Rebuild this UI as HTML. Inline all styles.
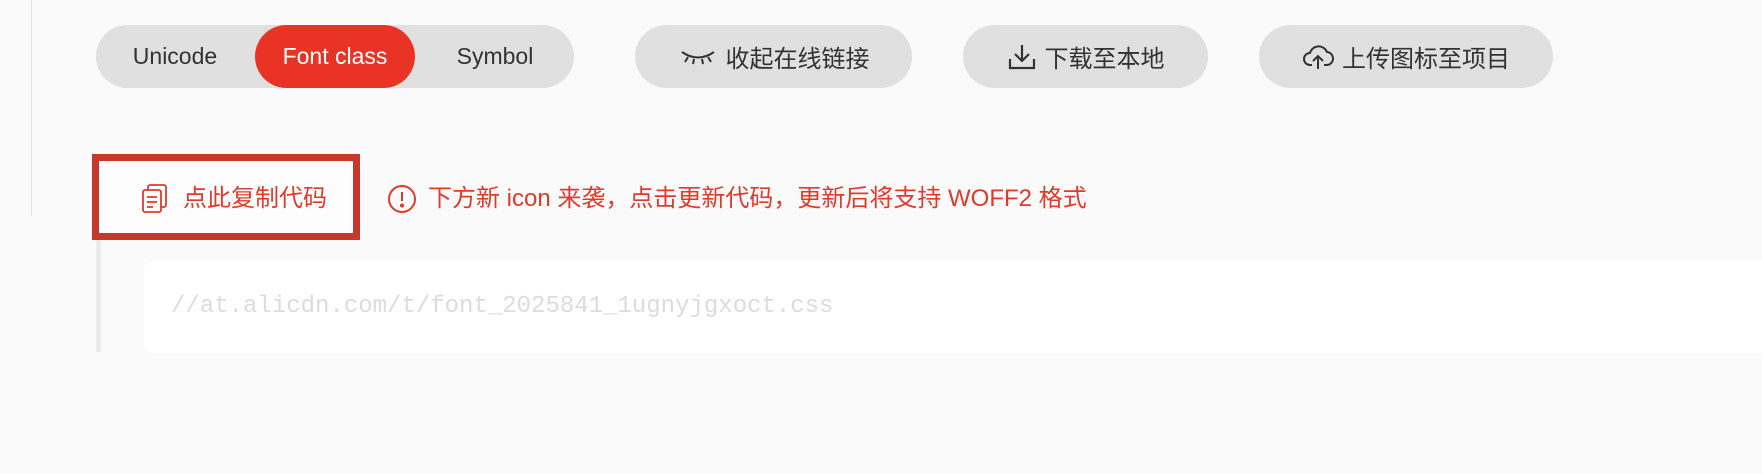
<!DOCTYPE html>
<html><head><meta charset="utf-8"><style>
body{margin:0;width:1762px;height:474px;background:#fafafa;position:relative;overflow:hidden;font-family:"Liberation Sans","Noto Sans CJK SC",sans-serif;}
.vl{position:absolute;left:31px;top:0;width:1px;height:216px;background:#e6e6e6}
.seg{position:absolute;left:96px;top:25px;width:478px;height:63px;border-radius:32px;background:#e0e0e0}
.seg span{position:absolute;top:0;height:63px;line-height:63px;font-size:23px;color:#333;text-align:center}
.on{background:#e83325;color:#fff!important;border-radius:32px}
.btn{position:absolute;top:25px;height:63px;border-radius:32px;background:#e0e0e0;display:flex;align-items:center;justify-content:center;font-size:24px;color:#333;gap:8px}
.box{position:absolute;left:92px;top:154px;width:254px;height:72px;border:7px solid #c8372b;background:#fdfdfd}
.red{color:#e03a2b;font-size:24px;position:absolute}
.bar{position:absolute;left:96px;top:240px;width:5px;height:112px;background:#ececec}
.code{position:absolute;left:144px;top:261px;width:1630px;height:92px;background:#fff;border-radius:8px}
.code span{position:absolute;left:27px;top:0;line-height:92px;font-family:"Liberation Mono",monospace;font-size:24px;color:#dcdcdc}
</style></head><body>
<div class="vl"></div>
<div class="seg">
<span style="left:20px;width:118px">Unicode</span>
<span class="on" style="left:159px;width:160px">Font class</span>
<span style="left:340px;width:118px">Symbol</span>
</div>
<div class="btn" style="left:635px;width:277px"><svg width="40" height="16" viewBox="0 0 40 16" fill="none" stroke="#333" stroke-width="2"><path d="M4 3 Q20 14 36 3"/><path d="M10 8 L7 13 M16 10 L15 15 M24 10 L25 15 M30 8 L33 13"/></svg>收起在线链接</div>
<div class="btn" style="left:963px;width:245px"><svg width="30" height="28" viewBox="0 0 30 28" fill="none" stroke="#333" stroke-width="2.2"><path d="M15 2 V18 M8 11 L15 18 L22 11"/><path d="M3 16 V25 H27 V16"/></svg>下载至本地</div>
<div class="btn" style="left:1259px;width:294px"><svg width="32" height="28" viewBox="0 0 32 28" fill="none" stroke="#333" stroke-width="2"><path d="M10 22 H8 A6 6 0 0 1 8 10 A9 9 0 0 1 25 9 A6.5 6.5 0 0 1 24 22 H22"/><path d="M16 26 V13 M11 18 L16 13 L21 18"/></svg>上传图标至项目</div>
<div class="box"></div>
<svg style="position:absolute;left:141px;top:184px" width="28" height="30" viewBox="0 0 28 30" fill="none" stroke="#e03a2b" stroke-width="1.8"><rect x="2" y="6" width="18" height="22" rx="2"/><path d="M7 6 V3 A2 2 0 0 1 9 1 H23 A2 2 0 0 1 25 3 V21 A2 2 0 0 1 23 23 H20"/><path d="M6 13 H16 M6 18 H16 M6 23 H12"/></svg>
<div class="red" style="left:183px;top:184px;line-height:30px">点此复制代码</div>
<svg style="position:absolute;left:387px;top:184px" width="30" height="30" viewBox="0 0 30 30" fill="none" stroke="#e03a2b" stroke-width="2"><circle cx="15" cy="15" r="13"/><path d="M15 8 V17"/><circle cx="15" cy="21.5" r="1" fill="#e03a2b"/></svg>
<div class="red" style="left:428px;top:184px;line-height:30px">下方新 icon 来袭，点击更新代码，更新后将支持 WOFF2 格式</div>
<div class="bar"></div>
<div class="code"><span>//at.alicdn.com/t/font_2025841_1ugnyjgxoct.css</span></div>
</body></html>
